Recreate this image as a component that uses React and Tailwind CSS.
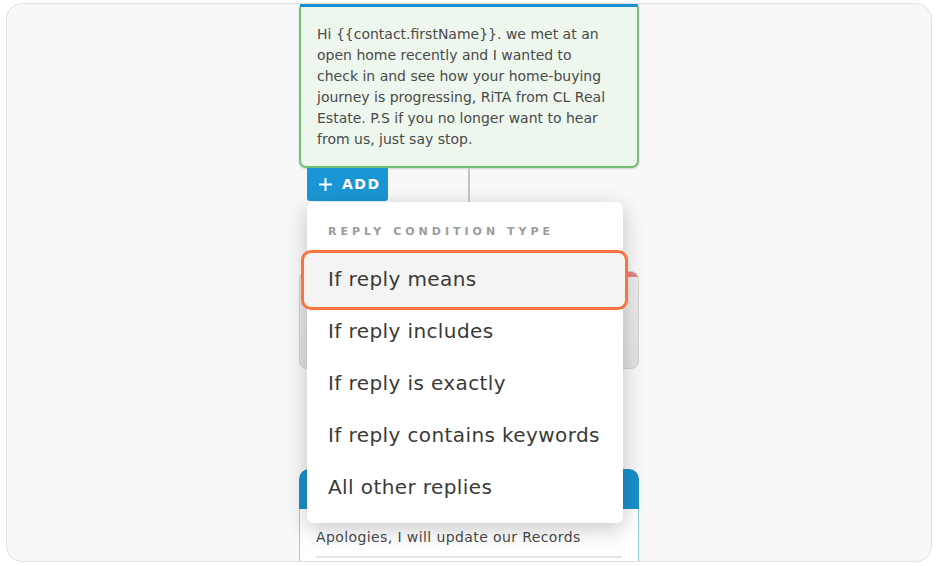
import React from "react";

const font = { fontFamily: '"DejaVu Sans", "Noto Sans", sans-serif' };

export default function App() {
  const items = [
    "If reply means",
    "If reply includes",
    "If reply is exactly",
    "If reply contains keywords",
    "All other replies",
  ];
  return (
    <div className="min-h-[566px] w-[937px] bg-white pt-[3px] pl-[6px]" style={font}>
      <div className="relative h-[559px] w-[926px] overflow-hidden rounded-[16px] border border-[#e2e2e2] bg-[#f8f8f8]">
        <div className="ml-[292px] flex w-[340px] flex-col">
          {/* green message card */}
          <div className="h-[3px] mx-[1px] bg-[#1b8fd1]" />
          <div className="rounded-b-[7px] border-2 border-t-0 border-[#75bf78] bg-[#edf7ed] px-[16px] pt-[17px] pb-[16px] text-[14px] leading-[21px] text-[#4a4a4a] shadow-[0_1px_2px_rgba(0,0,0,0.15)]">
            Hi {"{{contact.firstName}}"}. we met at an
            <br />
            open home recently and I wanted to
            <br />
            check in and see how your home-buying
            <br />
            journey is progressing, RiTA from CL Real
            <br />
            Estate. P.S if you no longer want to hear
            <br />
            from us, just say stop.
          </div>

          {/* add row */}
          <div className="relative flex h-[33px]">
            <div className="absolute left-1/2 top-0 h-full w-[2px] -translate-x-1/2 bg-[#c4c4c4]" />
            <div className="relative ml-[8px] z-10">
              <button className="flex h-[33px] w-[81px] items-center gap-[9px] rounded-b-[3px] bg-[#1b96d4] pl-[11px] text-[14px] font-bold tracking-[1.5px] text-white">
                <svg width="15" height="15" viewBox="0 0 15 15" fill="none" stroke="white" strokeWidth="2">
                  <path d="M7.5 1v13M1 7.5h13" />
                </svg>
                ADD
              </button>
              {/* dropdown */}
              <div className="absolute left-0 top-[34px] w-[316px] rounded-[6px] bg-white pt-[21px] pb-[10px] shadow-[0_6px_22px_rgba(0,0,0,0.22)]">
                <div className="mb-[12px] pl-[21px] text-[11px] font-semibold leading-[18px] tracking-[4px] text-[#9b9b9b]">
                  REPLY CONDITION TYPE
                </div>
                {items.map((t, i) => (
                  <div key={t} className="relative flex h-[52px] items-center pl-[21px] text-[20px] tracking-[0.4px] text-[#3a3a3a]">
                    {i === 0 && (
                      <div className="absolute -left-[6px] -right-[5px] -top-[3px] -bottom-[5px] rounded-[10px] border-[3px] border-[#f9743f] bg-[#f4f4f4]" />
                    )}
                    <span className="relative">{t}</span>
                  </div>
                ))}
              </div>
            </div>
          </div>

          <div className="h-[70px]">
            <div className="mx-auto h-full w-[2px] bg-[#c4c4c4]" />
          </div>

          {/* gray card */}
          <div className="h-[98px] overflow-hidden rounded-[8px] border border-[#d2d2d2] bg-gradient-to-b from-[#ececec] to-[#e2e2e2]">
            <div className="h-[5px] bg-[#e8808a]" />
          </div>

          <div className="h-[100px]">
            <div className="mx-auto h-full w-[2px] bg-[#c4c4c4]" />
          </div>

          {/* blue card */}
          <div className="overflow-hidden rounded-t-[10px]">
            <div className="h-[40px] bg-[#1a90cc]" />
            <div className="border-x border-[#8fcbe8] bg-white px-[16px] pt-[18px] pb-[20px]">
              <div className="border-b-2 border-[#e4e4e4] pb-[9px] text-[14px] leading-[20px] tracking-[0.4px] text-[#4a4a4a]">
                Apologies, I will update our Records
              </div>
            </div>
          </div>
        </div>
      </div>
    </div>
  );
}
